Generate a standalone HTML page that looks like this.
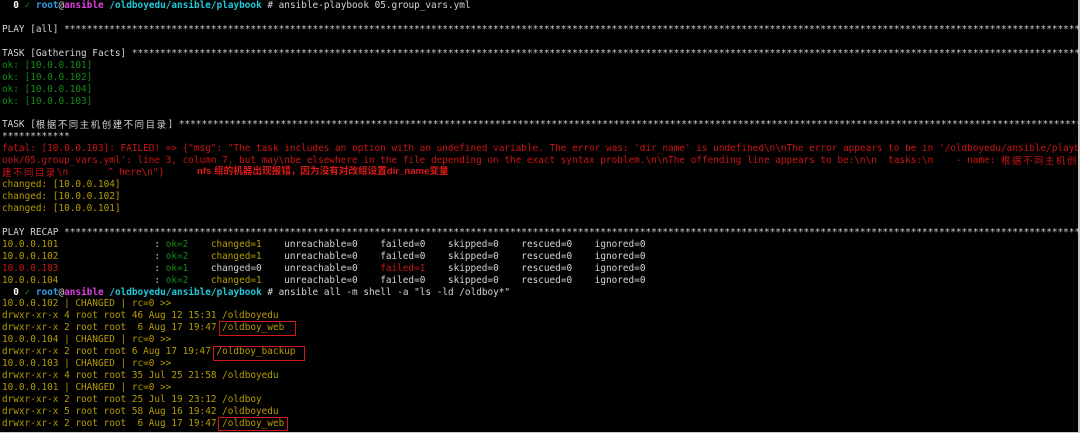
<!DOCTYPE html>
<html><head><meta charset="utf-8"><style>
html,body{margin:0;padding:0;background:#000;}
body{width:1080px;height:433px;overflow:hidden;position:relative;}
pre{margin:0;position:absolute;left:2px;top:0;width:1076px;overflow:hidden;font-family:"DejaVu Sans Mono","Liberation Mono","Noto Sans CJK SC",monospace;font-size:9.4px;line-height:11.93px;color:#d4d4d4;white-space:pre;}
.c{font-family:"Noto Sans CJK SC",sans-serif;letter-spacing:1.6px;display:inline-block;height:11.93px;line-height:11.93px;vertical-align:top;overflow:hidden;}
.g{color:#168a16}.y{color:#b49c00}.r{color:#cc1414}.s{color:#c8ccd0}
.b{font-weight:bold}.bl{color:#2f9fe8;font-weight:bold}.m{color:#e040e0;font-weight:bold}.cy{color:#20c8d8;font-weight:bold}.w{color:#fff;font-weight:bold}
.box{position:absolute;border:1.5px solid #d01818;box-sizing:border-box;}
.note{position:absolute;left:197px;top:166px;height:12px;line-height:12px;color:#e01818;font-weight:bold;font-size:9.6px;font-family:"Liberation Sans","Noto Sans CJK SC",sans-serif;white-space:nowrap;}
.rb{position:absolute;right:0;top:0;width:2px;height:433px;background:#c8c8c8;}
.bb{position:absolute;left:0;bottom:0;width:1080px;height:1px;background:#c8c8c8;}
</style></head><body>
<pre>  <span class="w">0</span> <span class="g">✓</span> <span class="bl">root</span>@<span class="m">ansible</span> <span class="cy">/oldboyedu/ansible/playbook</span> # ansible-playbook 05.group_vars.yml

PLAY [all] <span class="s">****************************************************************************************************************************************************************************************************</span>

TASK [Gathering Facts] <span class="s">****************************************************************************************************************************************************************************</span>
<span class="g">ok: [10.0.0.101]</span>
<span class="g">ok: [10.0.0.102]</span>
<span class="g">ok: [10.0.0.104]</span>
<span class="g">ok: [10.0.0.103]</span>

TASK [<span class="c">根据不同主机创建不同目录</span>] <span class="s">****************************************************************************************************************************************************************************</span>
<span class="s">************</span>
<span class="r">fatal: [10.0.0.103]: FAILED! =&gt; {"msg": "The task includes an option with an undefined variable. The error was: 'dir_name' is undefined\n\nThe error appears to be in '/oldboyedu/ansible/playb</span>
<span class="r">ook/05.group_vars.yml': line 3, column 7, but may\nbe elsewhere in the file depending on the exact syntax problem.\n\nThe offending line appears to be:\n\n  tasks:\n    - name: <span class="c">根据不同主机创</span></span>
<span class="r"><span class="c">建不同目录</span>\n       ^ here\n"}</span>
<span class="y">changed: [10.0.0.104]</span>
<span class="y">changed: [10.0.0.102]</span>
<span class="y">changed: [10.0.0.101]</span>

PLAY RECAP <span class="s">****************************************************************************************************************************************************************************************************</span>
<span class="y">10.0.0.101</span>                 : <span class="g">ok=2</span>    <span class="y">changed=1</span>    unreachable=0    failed=0    skipped=0    rescued=0    ignored=0
<span class="y">10.0.0.102</span>                 : <span class="g">ok=2</span>    <span class="y">changed=1</span>    unreachable=0    failed=0    skipped=0    rescued=0    ignored=0
<span class="r">10.0.0.103</span>                 : <span class="g">ok=1</span>    changed=0    unreachable=0    <span class="r">failed=1</span>    skipped=0    rescued=0    ignored=0
<span class="y">10.0.0.104</span>                 : <span class="g">ok=2</span>    <span class="y">changed=1</span>    unreachable=0    failed=0    skipped=0    rescued=0    ignored=0
  <span class="w">0</span> <span class="g">✓</span> <span class="bl">root</span>@<span class="m">ansible</span> <span class="cy">/oldboyedu/ansible/playbook</span> # ansible all -m shell -a "ls -ld /oldboy*"
<span class="y">10.0.0.102 | CHANGED | rc=0 &gt;&gt;</span>
<span class="y">drwxr-xr-x 4 root root 46 Aug 12 15:31 /oldboyedu</span>
<span class="y">drwxr-xr-x 2 root root  6 Aug 17 19:47 /oldboy_web</span>
<span class="y">10.0.0.104 | CHANGED | rc=0 &gt;&gt;</span>
<span class="y">drwxr-xr-x 2 root root 6 Aug 17 19:47 /oldboy_backup</span>
<span class="y">10.0.0.103 | CHANGED | rc=0 &gt;&gt;</span>
<span class="y">drwxr-xr-x 4 root root 35 Jul 25 21:58 /oldboyedu</span>
<span class="y">10.0.0.101 | CHANGED | rc=0 &gt;&gt;</span>
<span class="y">drwxr-xr-x 2 root root 25 Jul 19 23:12 /oldboy</span>
<span class="y">drwxr-xr-x 5 root root 58 Aug 16 19:42 /oldboyedu</span>
<span class="y">drwxr-xr-x 2 root root  6 Aug 17 19:47 /oldboy_web</span>
</pre>
<div class="note">nfs 组的机器出现报错，因为没有对改组设置dir_name变量</div>
<div class="box" style="left:219px;top:321px;width:77px;height:15px"></div>
<div class="box" style="left:213px;top:346px;width:92px;height:15px"></div>
<div class="box" style="left:218px;top:417px;width:70px;height:14px"></div>
<div class="rb"></div><div class="bb"></div>
</body></html>
